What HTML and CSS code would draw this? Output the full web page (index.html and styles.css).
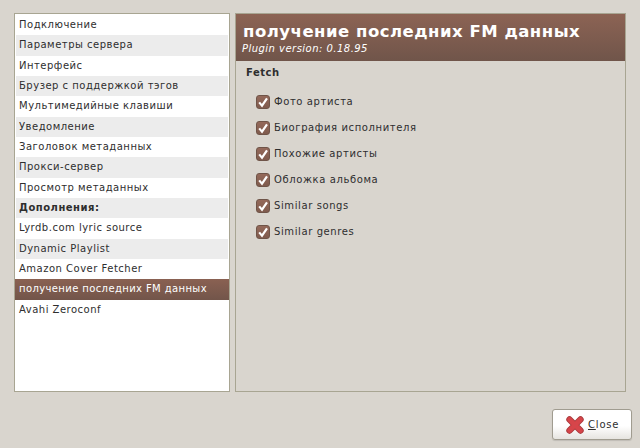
FILE: index.html
```html
<!DOCTYPE html>
<html lang="ru">
<head>
<meta charset="utf-8">
<title>Preferences</title>
<link rel="stylesheet" href="styles.css">
</head>
<body>
<div class="main">
  <ul class="list">
    <li class="row">Подключение</li>
    <li class="row alt">Параметры сервера</li>
    <li class="row">Интерфейс</li>
    <li class="row alt">Брузер с поддержкой тэгов</li>
    <li class="row">Мультимедийные клавиши</li>
    <li class="row alt">Уведомление</li>
    <li class="row">Заголовок метаданных</li>
    <li class="row alt">Прокси-сервер</li>
    <li class="row">Просмотр метаданных</li>
    <li class="row alt head">Дополнения:</li>
    <li class="row">Lyrdb.com lyric source</li>
    <li class="row alt">Dynamic Playlist</li>
    <li class="row">Amazon Cover Fetcher</li>
    <li class="row selected">получение последних FM данных</li>
    <li class="row">Avahi Zeroconf</li>
  </ul>
  <section class="panel">
    <header class="banner">
      <h1 class="title">получение последних FM данных</h1>
      <p class="version">Plugin version: 0.18.95</p>
    </header>
    <h2 class="group">Fetch</h2>
    <div class="checks">
      <label class="check"><span class="box"><svg viewBox="0 0 14 14" width="14" height="14"><path d="M3.2 7.4 L6 10.6 L11 3.4" fill="none" stroke="#fff" stroke-width="2.2"/></svg></span>Фото артиста</label>
      <label class="check"><span class="box"><svg viewBox="0 0 14 14" width="14" height="14"><path d="M3.2 7.4 L6 10.6 L11 3.4" fill="none" stroke="#fff" stroke-width="2.2"/></svg></span>Биография исполнителя</label>
      <label class="check"><span class="box"><svg viewBox="0 0 14 14" width="14" height="14"><path d="M3.2 7.4 L6 10.6 L11 3.4" fill="none" stroke="#fff" stroke-width="2.2"/></svg></span>Похожие артисты</label>
      <label class="check"><span class="box"><svg viewBox="0 0 14 14" width="14" height="14"><path d="M3.2 7.4 L6 10.6 L11 3.4" fill="none" stroke="#fff" stroke-width="2.2"/></svg></span>Обложка альбома</label>
      <label class="check"><span class="box"><svg viewBox="0 0 14 14" width="14" height="14"><path d="M3.2 7.4 L6 10.6 L11 3.4" fill="none" stroke="#fff" stroke-width="2.2"/></svg></span>Similar songs</label>
      <label class="check"><span class="box"><svg viewBox="0 0 14 14" width="14" height="14"><path d="M3.2 7.4 L6 10.6 L11 3.4" fill="none" stroke="#fff" stroke-width="2.2"/></svg></span>Similar genres</label>
    </div>
  </section>
</div>
<div class="actions">
  <button class="close" type="button"><svg class="x" viewBox="0 0 18 18" width="18" height="18"><path d="M3.5 3.5 L14.5 14.5 M14.5 3.5 L3.5 14.5" fill="none" stroke="#a83a3c" stroke-width="6.4" stroke-linecap="round"/><path d="M3.5 3.5 L14.5 14.5 M14.5 3.5 L3.5 14.5" fill="none" stroke="#d6454a" stroke-width="4.6" stroke-linecap="round"/></svg><span><u>C</u>lose</span></button>
</div>
</body>
</html>
```
FILE: styles.css
```css
* { box-sizing: border-box; }
html, body { margin: 0; height: 100%; }
body {
  width: 640px;
  height: 448px;
  background: #d9d5ce;
  font-family: "DejaVu Sans", sans-serif;
  font-size: 10px;
  letter-spacing: 0.5px;
  color: #2e2e2e;
  padding: 13px 8px 8px 14px;
  display: flex;
  flex-direction: column;
  overflow: hidden;
}
.main { display: flex; gap: 5px; height: 379px; }
.list {
  width: 216px;
  margin: 0;
  padding: 1px 1px 0 1px;
  list-style: none;
  background: #fff;
  border: 1px solid #a8a592;
}
.row {
  height: 20.33px;
  line-height: 20px;
  padding-left: 3px;
  white-space: nowrap;
}
.alt { background: #ececec; }
.head { font-weight: bold; }
.selected {
  background: linear-gradient(#8a6152, #72554a);
  color: #fff;
  margin: 0 -1px;
  padding-left: 4px;
  letter-spacing: 0.39px;
}
.panel {
  width: 391px;
  border: 1px solid #a8a592;
}
.banner {
  height: 47px;
  padding: 8px 6px 0 6px;
  color: #fff;
  background: linear-gradient(#8c6354, #70554a);
}
.title {
  margin: 0;
  padding-left: 1px;
  font-size: 16.5px;
  line-height: 19px;
  font-weight: bold;
  letter-spacing: 0.5px;
}
.version {
  margin: 1px 0 0;
  font-size: 10px;
  line-height: 13px;
  font-style: italic;
  letter-spacing: 0.47px;
}
.group {
  margin: 0;
  padding: 5px 0 0 10px;
  font-size: 10px;
  line-height: 14px;
  font-weight: bold;
  letter-spacing: 0.5px;
}
.checks {
  padding: 15px 0 0 20px;
  display: flex;
  flex-direction: column;
  gap: 12px;
  letter-spacing: 0.6px;
}
.check {
  display: flex;
  align-items: center;
  gap: 4px;
  height: 14px;
  line-height: 14px;
}
.box {
  width: 14px;
  height: 14px;
  border-radius: 3px;
  background: linear-gradient(#94695a, #7f5b4d);
  border: 1px solid #6f5448;
  display: flex;
  align-items: center;
  justify-content: center;
}
.box svg { flex: none; }
.actions {
  display: flex;
  justify-content: flex-end;
  padding-top: 17px;
}
.close {
  width: 80px;
  height: 31px;
  padding: 0 0 0 13px;
  display: flex;
  align-items: center;
  gap: 4px;
  font: inherit;
  letter-spacing: 0.8px;
  color: #2e2e2e;
  background: linear-gradient(#fff 55%, #e6e4e0);
  border: 1px solid #a09c90;
  border-radius: 3px;
  box-shadow: 0 1px 1px rgba(0,0,0,0.12);
}
.x { flex: none; }
```
